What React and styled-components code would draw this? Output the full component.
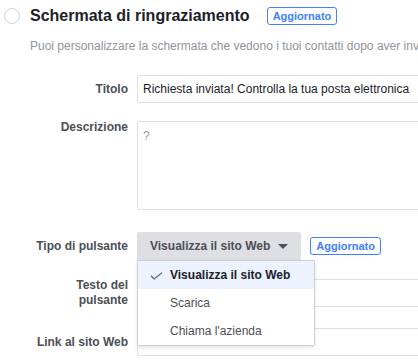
import styled, { createGlobalStyle } from 'styled-components';

const GlobalStyle = createGlobalStyle`
  html, body { margin: 0; padding: 0; background: #fff; }
  body { font-family: "Liberation Sans", Arial, sans-serif; overflow: hidden; width: 418px; height: 360px; }
`;

const Page = styled.div`padding:7px 0 0 4px;`;
const Header = styled.div`display:flex;align-items:center;height:18px;`;
const Radio = styled.span`width:16px;height:16px;box-sizing:border-box;border:1px solid #ccd0d5;border-radius:50%;flex:none;`;
const Title = styled.h2`margin:0 0 0 10px;font-size:16px;line-height:18px;font-weight:bold;color:#1d2129;white-space:nowrap;`;
const Badge = styled.span`box-sizing:border-box;height:18px;display:inline-flex;align-items:center;padding:0 5px;border:1px solid #4080ff;border-radius:3px;color:#4080ff;font-size:11px;font-weight:bold;margin-left:${(p) => p.$offset || 0}px;flex:none;`;
const Intro = styled.p`margin:13px 0 0 26px;font-size:12px;line-height:16px;color:#90949c;white-space:nowrap;`;

const Form = styled.div`margin-top:21px;padding-left:24px;`;
const Row = styled.div`display:grid;grid-template-columns:100px 1fr;column-gap:9px;align-items:${(p) => p.$top ? 'start' : 'center'};margin-bottom:${(p) => p.$space || 0}px;`;
const Label = styled.label`text-align:right;font-size:12px;line-height:15px;font-weight:bold;color:#4b4f56;margin-top:${(p) => p.$top ? -1 : 0}px;`;
const Input = styled.input`box-sizing:border-box;width:320px;height:28px;border:1px solid #dddfe2;border-radius:2px;padding:0 5px;font:12px "Liberation Sans", Arial, sans-serif;color:#1d2129;background:#fff;outline:none;`;
const Area = styled.textarea`box-sizing:border-box;display:block;width:320px;height:89px;border:1px solid #dddfe2;border-radius:2px;padding:6px 5px;font:12px/16px "Liberation Sans", Arial, sans-serif;color:#1d2129;resize:none;outline:none;&::placeholder{color:#90949c;}`;

const Controls = styled.div`display:flex;align-items:center;`;
const Select = styled.div`position:relative;`;
const SelectButton = styled.button`box-sizing:border-box;height:28px;display:flex;align-items:center;gap:8px;padding:0 13px;border:none;border-radius:2px 2px 0 0;background:#dddfe2;color:#4b4f56;font:bold 12px "Liberation Sans", Arial, sans-serif;cursor:pointer;`;
const Caret = styled.span`width:0;height:0;border-left:5px solid transparent;border-right:5px solid transparent;border-top:5px solid #4b4f56;margin-top:1px;`;
const Menu = styled.ul`position:absolute;top:100%;left:0;z-index:2;box-sizing:border-box;width:178px;margin:0;padding:0;list-style:none;background:#fff;border:1px solid #ccd0d5;border-radius:0 0 2px 2px;box-shadow:0 2px 4px rgba(0,0,0,0.1);`;
const Item = styled.li`position:relative;height:28px;display:flex;align-items:center;padding-left:32px;font-size:12px;color:${(p) => p.$active ? '#1d2129' : '#4b4f56'};font-weight:${(p) => p.$active ? 'bold' : 'normal'};background:${(p) => p.$active ? '#ecf3ff' : '#fff'};`;
const Check = styled.svg`position:absolute;left:12px;top:11px;`;

const options = ['Visualizza il sito Web', 'Scarica', "Chiama l'azienda"];

export default function App() {
  return (
    <Page>
      <GlobalStyle />
      <Header>
        <Radio />
        <Title>Schermata di ringraziamento</Title>
        <Badge $offset={17}>Aggiornato</Badge>
      </Header>
      <Intro>Puoi personalizzare la schermata che vedono i tuoi contatti dopo aver inviato il modulo.</Intro>
      <Form>
        <Row $space={18}>
          <Label>Titolo</Label>
          <Input readOnly defaultValue="Richiesta inviata! Controlla la tua posta elettronica" />
        </Row>
        <Row $top $space={22}>
          <Label $top>Descrizione</Label>
          <Area readOnly placeholder="?" />
        </Row>
        <Row $space={18}>
          <Label>Tipo di pulsante</Label>
          <Controls>
            <Select>
              <SelectButton>
                Visualizza il sito Web
                <Caret />
              </SelectButton>
              <Menu>
                {options.map((o, i) => (
                  <Item key={o} $active={i === 0}>
                    {i === 0 && (
                      <Check width="13" height="8" viewBox="0 0 13 8">
                        <path d="M1 3.8 L4.2 7 L12 0.8" fill="none" stroke="#606770" strokeWidth="1.3" />
                      </Check>
                    )}
                    {o}
                  </Item>
                ))}
              </Menu>
            </Select>
            <Badge $offset={9}>Aggiornato</Badge>
          </Controls>
        </Row>
        <Row $space={20}>
          <Label>Testo del pulsante</Label>
          <Input readOnly />
        </Row>
        <Row>
          <Label>Link al sito Web</Label>
          <Input readOnly />
        </Row>
      </Form>
    </Page>
  );
}
